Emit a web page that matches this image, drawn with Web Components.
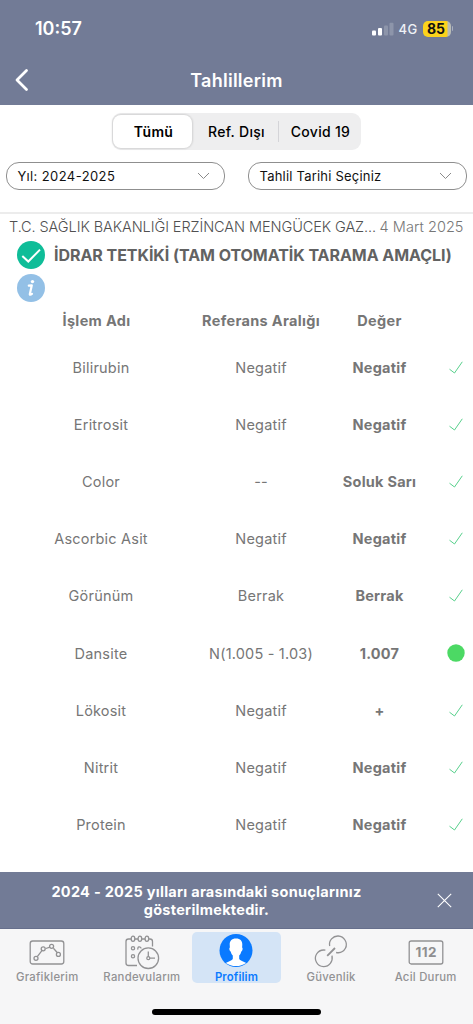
<!DOCTYPE html>
<html lang="tr">
<head>
<meta charset="utf-8">
<meta name="viewport" content="width=device-width, initial-scale=1">
<title>Tahlillerim</title>
<style>
  html, body { margin: 0; height: 100%; }
  body { font-family: Inter, 'Noto Sans', sans-serif; background: #fff; overflow: hidden; }
</style>
</head>
<body>
<lab-app>
  <lab-header slot="top" time="10:57" network="4G" battery="85">Tahlillerim</lab-header>
  <lab-segments></lab-segments>
  <lab-filters>
    <lab-select style="--ls:.42px">Yıl: 2024-2025</lab-select>
    <lab-select style="--ls:.21px">Tahlil Tarihi Seçiniz</lab-select>
  </lab-filters>
  <lab-report>
    <span slot="place">T.C. SAĞLIK BAKANLIĞI ERZİNCAN MENGÜCEK GAZ...</span>
    <span slot="date">4 Mart 2025</span>
    <span slot="title">İDRAR TETKİKİ (TAM OTOMATİK TARAMA AMAÇLI)</span>
  </lab-report>
  <lab-results></lab-results>
  <lab-banner slot="bottom">2024 - 2025 yılları arasındaki sonuçlarınız<br>gösterilmektedir.</lab-banner>
  <lab-tabs slot="bottom"></lab-tabs>
</lab-app>

<script>
(function () {
  function define(name, render) {
    customElements.define(name, class extends HTMLElement {
      connectedCallback() {
        if (this.shadowRoot) return;
        this.attachShadow({ mode: 'open' }).innerHTML = render(this);
      }
    });
  }

  define('lab-app', function () {
    return "<style>\
:host{display:flex;flex-direction:column;height:1024px;background:#fff}\
main{flex:1;min-height:0;overflow:hidden}\
</style><slot name='top'></slot><main><slot></slot></main><slot name='bottom'></slot>";
  });

  define('lab-header', function (el) {
    return "<style>\
:host{display:block;height:105px;background:#727b96;color:#fff;flex:none}\
.status{display:flex;align-items:center;height:57px;padding:0 20px 0 35px;font:600 18px Inter,sans-serif}\
.right{margin-left:auto;display:flex;align-items:center}\
.bars{display:block;margin-right:5px}\
.net{font:500 13px Inter,sans-serif;letter-spacing:.4px;color:#eef1f6;width:24px}\
.bat{display:flex;align-items:center;justify-content:center;width:28px;height:16px;border-radius:5px;background:linear-gradient(90deg,#fcd31c 24px,#b9bcb6 25px);color:#111;font:700 14px Inter,sans-serif;box-sizing:border-box;padding-right:1px}\
.nub{width:1.5px;height:5px;margin-left:1px;border-radius:0 2px 2px 0;background:#a9afbf}\
.nav{display:grid;grid-template-columns:60px 1fr 60px;align-items:center;height:46px}\
.nav svg{display:block;margin-left:14px}\
h1{margin:0;text-align:center;font:600 18px Inter,sans-serif;letter-spacing:.26px}\
</style>\
<div class='status'><span>" + el.getAttribute('time') + "</span><div class='right'>\
<svg class='bars' width='22' height='14' viewBox='0 0 22 14'><g fill='#fff'><rect x='0' y='8.5' width='4' height='5' rx='1'/><rect x='6' y='6' width='4' height='7.5' rx='1'/></g><g fill='#8d95aa'><rect x='12' y='3.5' width='4' height='10' rx='1'/><rect x='17.5' y='.8' width='4' height='12.7' rx='1'/></g></svg>\
<span class='net'>" + el.getAttribute('network') + "</span><span class='bat'>" + el.getAttribute('battery') + "</span><span class='nub'></span></div></div>\
<div class='nav'><svg width='16' height='24' viewBox='0 0 16 24' fill='none' stroke='#fff' stroke-width='2.8' stroke-linecap='round' stroke-linejoin='round'><path d='M12.5 2.5 3 12l9.5 9.5'/></svg><h1><slot></slot></h1></div>";
  });

  define('lab-segments', function () {
    return "<style>\
:host{display:grid;grid-template-columns:79px 87px 82px;width:249px;height:37px;margin:8px 0 0 112px;padding:2px 0 2px 1px;box-sizing:border-box;border-radius:9px;background:#eeeeef;font:500 14px Inter,sans-serif;color:#000}\
span{display:flex;align-items:center;justify-content:center;letter-spacing:.3px;padding-left:2px}\
.on{background:#fff;border-radius:8px;font-weight:600;box-shadow:0 0 2px 1px rgba(0,0,0,.12)}\
.last{position:relative;padding-left:1px}\
.last:before{content:'';position:absolute;left:-1px;top:6px;width:1px;height:21px;background:#d4d4d8}\
</style><span class='on'>Tümü</span><span>Ref. Dışı</span><span class='last'>Covid 19</span>";
  });

  define('lab-filters', function () {
    return "<style>:host{display:grid;grid-template-columns:219px 219px;gap:23px;padding:12px 0 0 6px}</style><slot></slot>";
  });

  define('lab-select', function () {
    return "<style>\
:host{display:flex;align-items:center;justify-content:space-between;height:28px;box-sizing:border-box;border:1px solid #8f8f8f;border-radius:13px;padding:0 14px 0 10.5px;font:400 13px Inter,sans-serif;letter-spacing:var(--ls);color:#111}\
</style><span><slot></slot></span><svg width='13' height='8' viewBox='0 0 13 8' fill='none' stroke='#8a8a8a' stroke-width='1'><path d='M1 1l5.5 5.5L12 1'/></svg>";
  });

  define('lab-report', function () {
    return "<style>\
:host{display:block;margin-top:22px;border-top:2px solid #ececec}\
.meta{display:flex;justify-content:space-between;align-items:center;height:25px;padding:0 9.5px 0 9px;font:300 14.5px Inter,sans-serif;white-space:nowrap;color:#505050}\
.meta .place{letter-spacing:-.08px}\
.meta .date{color:#777;letter-spacing:.05px}\
.title{display:flex;align-items:center;gap:9px;height:32px;padding-left:17px;font:700 16px Inter,sans-serif;letter-spacing:-.05px;color:#626262;white-space:nowrap}\
.info{display:block;margin:3px 0 0 17px}\
svg{flex:none}\
</style>\
<div class='meta'><span class='place'><slot name='place'></slot></span><span class='date'><slot name='date'></slot></span></div>\
<div class='title'><svg width='28' height='28' viewBox='0 0 28 28'><circle cx='14' cy='14' r='14' fill='#0fbd98'/><path d='M5.3 14.9l6 5.6L23 8.6' fill='none' stroke='#fff' stroke-width='2'/></svg><slot name='title'></slot></div>\
<svg class='info' width='28' height='28' viewBox='0 0 28 28'><circle cx='14' cy='14' r='14' fill='#93c0e6'/><path d='M11.8 11.6l3-.3-2 8.900q-.1 1.200 2.200-.3' fill='none' stroke='#fff' stroke-width='2.2' stroke-linejoin='round' stroke-linecap='round'/><circle cx='15.5' cy='7.6' r='1.7' fill='#fff'/></svg>";
  });

  var ROWS = [
    ['Bilirubin', 'Negatif', 'Negatif'],
    ['Eritrosit', 'Negatif', 'Negatif'],
    ['Color', '--', 'Soluk Sarı'],
    ['Ascorbic Asit', 'Negatif', 'Negatif'],
    ['Görünüm', 'Berrak', 'Berrak'],
    ['Dansite', 'N(1.005 - 1.03)', '1.007', 'dot'],
    ['Lökosit', 'Negatif', '+'],
    ['Nitrit', 'Negatif', 'Negatif'],
    ['Protein', 'Negatif', 'Negatif']
  ];
  var TICK = "<svg width='14' height='13' viewBox='0 0 14 13' fill='none' stroke='#58d08c' stroke-width='1'><path d='M.5 8.2l5 3.8L13.3.8'/></svg>";
  var DOT = "<svg width='18' height='18' viewBox='0 0 18 18'><circle cx='9' cy='9' r='8.7' fill='#4cd964'/></svg>";

  define('lab-results', function () {
    return "<style>\
:host{display:block;color:#767676;font:400 14.5px Inter,sans-serif}\
.row{display:grid;grid-template-columns:160px 160px 77px 36px;align-items:center;height:57.15px;padding-left:21px;text-align:center;letter-spacing:.2px;white-space:nowrap}\
.row.head{height:36.8px;font-weight:700;letter-spacing:.33px}\
.row.head span:first-child{padding-right:9px}\
b{font-weight:700;letter-spacing:.24px}\
i{display:flex;justify-content:center;margin-left:20px;width:36px}\
</style>\
<div class='row head'><span>İşlem Adı</span><span>Referans Aralığı</span><span>Değer</span></div>" +
      ROWS.map(function (r) {
        return "<div class='row'><span>" + r[0] + "</span><span>" + r[1] + "</span><b>" + r[2] + "</b><i>" + (r[3] ? DOT : TICK) + "</i></div>";
      }).join('');
  });

  define('lab-banner', function () {
    return "<style>\
:host{display:grid;grid-template-columns:1fr 59px;align-items:center;height:57px;box-sizing:border-box;border-bottom:1px solid #666f8c;background:#727b96;color:#fff;font:700 14.5px/18px Inter,sans-serif;letter-spacing:.27px;text-align:center;flex:none}\
p{margin:0;padding:1px 1px 0 0}\
svg{margin-left:23px}\
</style><p><slot></slot></p><svg width='15' height='15' viewBox='0 0 15 15' stroke='#fff' stroke-width='1.1'><path d='M.8.8l13.4 13.4M14.2.8L.8 14.2'/></svg>";
  });

  var TABS = [
    ['Grafiklerim', "<rect x='3.2' y='7' width='33.6' height='23' rx='2.5'/><path d='M10.3 22.6l5-6.4M18.8 14.5l4.2-1.4M26.4 14.3l4 4.5'/><circle cx='9' cy='24.3' r='2'/><circle cx='16.2' cy='14.8' r='2'/><circle cx='24.6' cy='12.3' r='2'/><circle cx='31.4' cy='20.4' r='2'/>"],
    ['Randevularım', "<path d='M9.3 5H6.5Q4 5 4 7.5V29q0 2.5 2.5 2.5H15M12.8 5h3.2M19.7 5h3.3M26.7 5H28q2.5 0 2.5 2.5v5'/><ellipse cx='11' cy='4.7' rx='1.8' ry='2.6'/><ellipse cx='17.9' cy='4.7' rx='1.8' ry='2.6'/><ellipse cx='24.9' cy='4.7' rx='1.8' ry='2.6'/><circle cx='11' cy='14.3' r='1.6'/><path d='M16.2 15.5a1.6 1.6 0 1 1 2.8-1'/><circle cx='11' cy='22.3' r='1.6'/><circle cx='26.3' cy='24.2' r='10.3'/><circle cx='26.3' cy='24.2' r='1.5'/><path d='M26.3 17.5v5.2M27.8 24.2h5.2'/>"],
    ['Profilim', "<circle cx='20' cy='16.5' r='16.5' fill='#0a7aff' stroke='none'/><path fill='#fff' stroke='none' d='M20 4.6c-4.5 0-6.4 2.7-6.3 6.2l.2 2.6c-1 .4-.5 3.5.8 4 .5 2 1.1 3.1 2.1 4.1v3.2c-.7 2-4.5 2.7-7 4.2C12.8 31 16.2 32 20 32s7.2-1 10.2-3.1c-2.5-1.5-6.3-2.2-7-4.2v-3.2c1-1 1.6-2.1 2.1-4.1 1.3-.5 1.8-3.6.8-4l.2-2.6C26.4 7.3 24.5 4.6 20 4.6z'/>", 'on'],
    ['Güvenlik', "<path d='M18.7 12C17.5 6.5 22 1.8 27.2 2c6 .3 10 6.9 7.2 12.3-2 3.7-5.8 4.9-9.3 4.2'/><path d='M21 21.6c1.2 5.9-2.8 11.1-8.5 11C6.2 32.3 2.3 25.4 5.6 20c2-3.2 5.3-4.4 8.8-3.9'/><path d='M16.2 21.8l7.8-7.8' stroke-width='1.8'/>"],
    ['Acil Durum', "<rect x='3.2' y='7' width='33.6' height='23' rx='2'/><text x='20.3' y='23.3' text-anchor='middle' fill='#8e8e90' stroke='none' font-family='Inter' font-weight='700' font-size='13.5' letter-spacing='.5'>112</text>"]
  ];

  define('lab-tabs', function () {
    return "<style>\
:host{display:flex;flex-direction:column;height:95px;background:#f6f6f7;flex:none}\
nav{display:grid;grid-template-columns:repeat(5,94.6px);height:54px;padding-top:3px;box-sizing:border-box}\
a{display:flex;flex-direction:column;align-items:center;margin:0 3px;height:51px;border-radius:5px;color:#929294;font:500 11.3px/14px Inter,sans-serif;letter-spacing:.27px;white-space:nowrap}\
a.on{background:#d4e4f6;color:#0a7aff;font-weight:600;letter-spacing:.15px}\
svg{display:block;margin:2px 0 1px;overflow:visible}\
.home{width:169px;height:6px;border-radius:3px;background:#000;margin:26px auto 0}\
</style><nav>" +
      TABS.map(function (t) {
        return "<a class='" + (t[2] || '') + "'><svg width='40' height='35' viewBox='0 0 40 35' fill='none' stroke='#929294' stroke-width='1.3'>" + t[1] + "</svg>" + t[0] + "</a>";
      }).join('') + "</nav><div class='home'></div>";
  });
})();
</script>
</body>
</html>
